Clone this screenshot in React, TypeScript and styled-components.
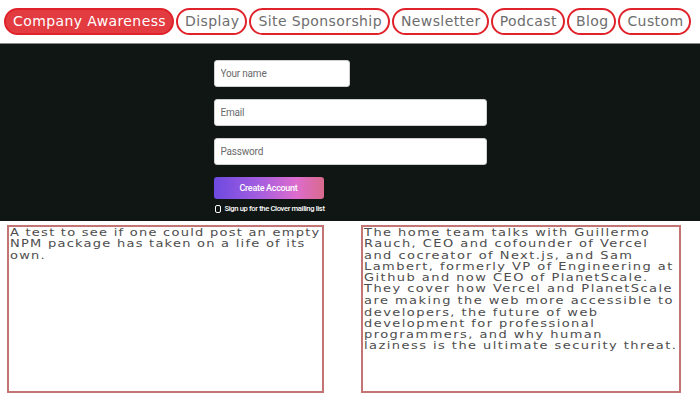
import React from "react";
import styled, { createGlobalStyle } from "styled-components";

const Global = createGlobalStyle`
  html, body { margin: 0; padding: 0; background: #ffffff; }
  * { box-sizing: border-box; }
`;

const Page = styled.div`
  width: 700px;
  height: 400px;
  display: flex;
  flex-direction: column;
  overflow: hidden;
  background: #ffffff;
`;

const Nav = styled.nav`
  height: 44px;
  display: flex;
  align-items: center;
  gap: 2px;
  padding: 0 0 1px 4px;
  border-bottom: 1px solid #8a8a8a;
  background: #ffffff;
`;

const Pill = styled.button<{ $active?: boolean }>`
  height: 27px;
  padding: 0 6px 0 7px;
  border: 2px solid #e0222b;
  border-radius: 14px;
  background: ${(p) => (p.$active ? "#e23b40" : "#ffffff")};
  color: ${(p) => (p.$active ? "#ffffff" : "#6d6d6d")};
  font-family: "DejaVu Sans", Verdana, sans-serif;
  font-size: 14px;
  letter-spacing: 0.4px;
  line-height: 1;
  white-space: nowrap;
  cursor: pointer;
`;

const Hero = styled.section`
  height: 177px;
  background: #101614;
  display: flex;
  justify-content: center;
  padding-top: 16px;
`;

const Form = styled.form`
  width: 273px;
  display: flex;
  flex-direction: column;
  align-items: flex-start;
  gap: 12px;
`;

const Input = styled.input<{ $half?: boolean }>`
  width: ${(p) => (p.$half ? "136px" : "100%")};
  height: 27px;
  border: 1px solid #d0d0d0;
  border-radius: 3px;
  background: #ffffff;
  padding: 0 6px;
  font-family: Roboto, "Liberation Sans", sans-serif;
  font-size: 10px;
  letter-spacing: -0.2px;
  color: #333;
  outline: none;
  &::placeholder { color: #6a6a6a; }
`;

const Submit = styled.button`
  width: 110px;
  height: 22px;
  border: none;
  border-radius: 3px;
  background: linear-gradient(90deg, #6d4ae0 0%, #a35de0 40%, #dd6ccd 75%, #d86a8c 100%);
  color: #ffffff;
  font-family: Roboto, "Liberation Sans", sans-serif;
  font-weight: 500;
  font-size: 9px;
  letter-spacing: -0.3px;
  cursor: pointer;
`;

const CheckRow = styled.label`
  display: flex;
  align-items: center;
  gap: 4px;
  margin-top: -7px;
  padding-left: 1px;
  color: #ffffff;
  font-family: Roboto, "Liberation Sans", sans-serif;
  font-size: 7.6px;
  letter-spacing: -0.35px;
  font-weight: 500;
`;

const Box = styled.span`
  width: 6px;
  height: 8px;
  border: 1px solid #ffffff;
  border-radius: 2px;
`;

const Cards = styled.section`
  flex: 1;
  display: grid;
  grid-template-columns: 317px 320px;
  column-gap: 37px;
  padding: 4px 0 0 7px;
  align-content: start;
`;

const Card = styled.article`
  height: 168px;
  border: 2px solid #c47474;
  padding: 0 0 0 1px;
  margin: 0;
  overflow: hidden;
`;

const CardText = styled.div<{ $tracking: number }>`
  font-family: "DejaVu Sans", Verdana, sans-serif;
  font-size: 13px;
  line-height: 15.1px;
  letter-spacing: ${(p) => p.$tracking}px;
  color: #4d4d4d;
  transform: scaleY(0.75);
  transform-origin: 0 0;
`;

const Line = styled.span`
  display: block;
  white-space: nowrap;
`;

const tabs = ["Company Awareness", "Display", "Site Sponsorship", "Newsletter", "Podcast", "Blog", "Custom"];

const npmLines = [
  "A test to see if one could post an empty",
  "NPM package has taken on a life of its",
  "own.",
];

const podcastLines = [
  "The home team talks with Guillermo",
  "Rauch, CEO and cofounder of Vercel",
  "and cocreator of Next.js, and Sam",
  "Lambert, formerly VP of Engineering at",
  "Github and now CEO of PlanetScale.",
  "They cover how Vercel and PlanetScale",
  "are making the web more accessible to",
  "developers, the future of web",
  "development for professional",
  "programmers, and why human",
  "laziness is the ultimate security threat.",
];

export default function App() {
  return (
    <Page>
      <Global />
      <Nav>
        {tabs.map((t, i) => (
          <Pill key={t} $active={i === 0}>
            {t}
          </Pill>
        ))}
      </Nav>
      <Hero>
        <Form onSubmit={(e) => e.preventDefault()}>
          <Input $half placeholder="Your name" />
          <Input placeholder="Email" />
          <Input type="password" placeholder="Password" />
          <Submit type="submit">Create Account</Submit>
          <CheckRow>
            <Box />
            Sign up for the Clover mailing list
          </CheckRow>
        </Form>
      </Hero>
      <Cards>
        <Card>
          <CardText $tracking={1.25}>
            {npmLines.map((l) => (
              <Line key={l}>{l}</Line>
            ))}
          </CardText>
        </Card>
        <Card>
          <CardText $tracking={1.45}>
            {podcastLines.map((l) => (
              <Line key={l}>{l}</Line>
            ))}
          </CardText>
        </Card>
      </Cards>
    </Page>
  );
}
